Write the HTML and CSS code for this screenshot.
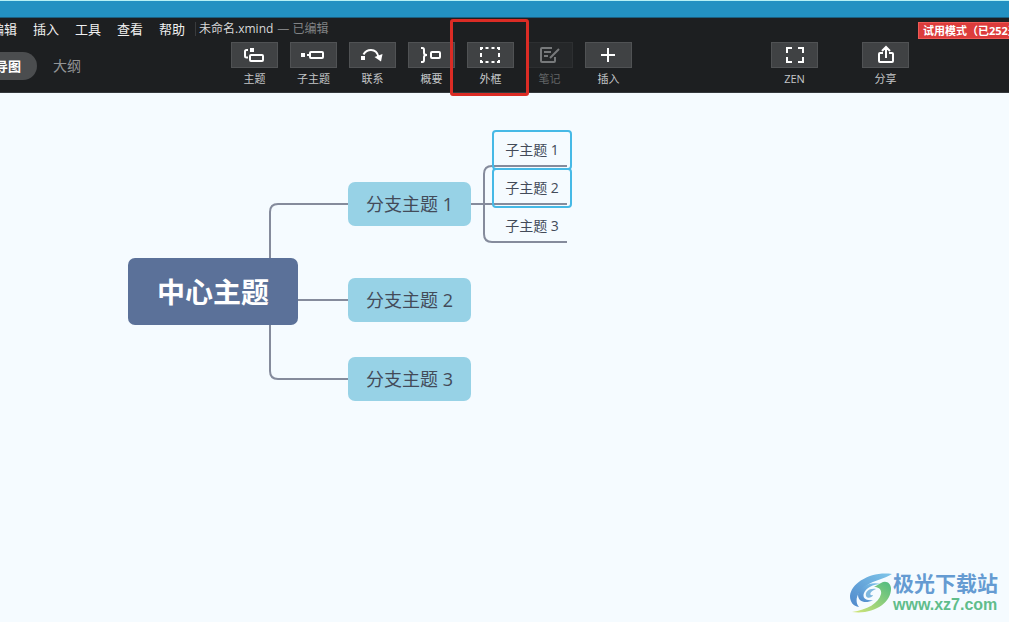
FILE: index.html
```html
<!DOCTYPE html>
<html lang="zh-CN">
<head>
<meta charset="utf-8">
<title>未命名.xmind</title>
<link rel="stylesheet" href="styles.css">
</head>
<body>
<div class="app">
  <header class="header">
    <div class="titlestrip"></div>
    <div class="menubar">
      <nav class="menus">
        <button class="menu">编辑</button>
        <button class="menu">插入</button>
        <button class="menu">工具</button>
        <button class="menu">查看</button>
        <button class="menu">帮助</button>
      </nav>
      <span class="filename">未命名.xmind</span>
      <span class="status">— 已编辑</span>
      <div class="trial">试用模式（已252天）</div>
    </div>
    <div class="toolbar">
      <div class="views">
        <button class="view view-active">思维导图</button>
        <button class="view">大纲</button>
      </div>
      <div class="tools">
        <button class="tool"><span class="tool-icon"><svg class="icon" viewBox="0 0 23 18"><path d="M5 4H3.500Q2 4 2 5.500V10Q2 11.500 3.500 11.500H5"/><path class="solid" d="M7 2h4v4H7z"/><rect x="7" y="9" width="13" height="6" rx="1"/></svg></span><span class="tool-label">主题</span></button>
        <button class="tool"><span class="tool-icon"><svg class="icon" viewBox="0 0 23 18"><path class="solid" d="M-1 7h4v4H-1z"/><path d="M5 9h3"/><rect x="8" y="6" width="13" height="6" rx="1"/></svg></span><span class="tool-label">子主题</span></button>
        <button class="tool"><span class="tool-icon"><svg class="icon" viewBox="0 0 23 18"><path class="solid" d="M0 10h4v4H0z"/><path d="M2.500 8.500Q5 4 10 4Q16 4 17.500 11"/><path class="solid" d="M13.500 11L21.500 8L20 15.500z"/></svg></span><span class="tool-label">联系</span></button>
        <button class="tool"><span class="tool-icon"><svg class="icon" viewBox="0 0 23 18"><path d="M1 2H2.500Q4 2 4 4V7Q4 9 7 9Q4 9 4 11V14Q4 16 2.500 16H1"/><rect x="11" y="6" width="9" height="6" rx="1"/></svg></span><span class="tool-label">概要</span></button>
        <button class="tool"><span class="tool-icon"><svg class="icon" viewBox="0 0 23 18"><path d="M2 4V2H4M6.500 2h3M12.500 2h3M18 2H20V4M20 7v4M20 14v2H18M15.500 16h-3M9.500 16h-3M4 16H2V14M2 11v-4"/></svg></span><span class="tool-label">外框</span><span class="highlight"></span></button>
        <button class="tool tool-off" disabled><span class="tool-icon"><svg class="icon" viewBox="0 0 23 18"><path d="M14 2H4Q3 2 3 3V15Q3 16 4 16H16Q17 16 17 15V11M6 6h7M6 10h4M21 3L12 12"/></svg></span><span class="tool-label">笔记</span></button>
        <button class="tool"><span class="tool-icon"><svg class="icon" viewBox="0 0 23 18"><path d="M11 2V16M4 9H18"/></svg></span><span class="tool-label">插入</span></button>
      </div>
      <div class="tools tools-end">
        <button class="tool"><span class="tool-icon"><svg class="icon" viewBox="0 0 23 18"><path d="M4 7V2H9M15 2H20V7M20 11V16H15M9 16H4V11"/></svg></span><span class="tool-label">ZEN</span></button>
        <button class="tool"><span class="tool-icon"><svg class="icon" viewBox="0 0 23 18"><path d="M9 7H6Q5 7 5 8V15Q5 16 6 16H18Q19 16 19 15V8Q19 7 18 7H15M12 12V2M8 5L12 1L16 5"/></svg></span><span class="tool-label">分享</span></button>
      </div>
    </div>
  </header>
  <main class="canvas">
    <svg class="links" width="600" height="320" viewBox="0 0 600 320">
      <path d="M348 111H278Q270 111 270 119V278Q270 286 278 286H348M290 207H348"/>
      <path d="M470 111H567M567 73H492Q484 73 484 81V141Q484 149 492 149H567"/>
    </svg>
    <div class="node root">中心主题</div>
    <div class="node branch branch-1">分支主题 1</div>
    <div class="node branch branch-2">分支主题 2</div>
    <div class="node branch branch-3">分支主题 3</div>
    <div class="node leaf leaf-1 selected">子主题 1</div>
    <div class="node leaf leaf-2 selected">子主题 2</div>
    <div class="node leaf leaf-3">子主题 3</div>
    <div class="watermark">
      <svg class="logo" viewBox="0 0 44 42">
        <defs>
          <linearGradient id="sky" x1="0" y1="1" x2="1" y2="0"><stop offset="0" stop-color="#4f88cb"/><stop offset="1" stop-color="#7fc6ea"/></linearGradient>
          <linearGradient id="leaf" x1="0" y1="1" x2="1" y2="0"><stop offset="0" stop-color="#d5e678"/><stop offset="1" stop-color="#4fba80"/></linearGradient>
        </defs>
        <path fill="url(#sky)" d="M43 2C22-1 2 11 1 24C1 30 4 34 10 35C5 29 8 20 17 14C25 8 35 7 43 2Z"/>
        <path fill="url(#sky)" d="M32 12C20 9 9 16 9 23C9 30 17 32 24 28C17 29 13 26 15 21C17 16 24 12 32 12Z"/>
        <path fill="#7fb8df" d="M27 17C20 16 16 20 17 24C18 27 23 26 24 23C20 24 20 20 27 17Z"/>
        <path fill="url(#leaf)" d="M32 11C37 8 42 11 42 17C42 31 24 43 3 40C18 38 30 31 32 22C33 17 29 15 25 15Z"/>
      </svg>
      <div class="brand"><span class="brand-name">极光下载站</span><span class="brand-url">www.xz7.com</span></div>
    </div>
  </main>
</div>
</body>
</html>
```
FILE: styles.css
```css
* { box-sizing: border-box; }

body {
  margin: 0;
  font-family: "Open Sans", "Noto Sans CJK SC", sans-serif;
  background: #f5fbff;
}

button {
  margin: 0;
  padding: 0;
  border: 0;
  background: none;
  color: inherit;
  font: inherit;
  white-space: nowrap;
}

.app {
  display: flex;
  flex-direction: column;
  min-height: 100vh;
  overflow: hidden;
}

.header {
  background: #1d1f21;
  color: #f0f0f0;
  border-bottom: 1px solid #34383c;
}

.titlestrip {
  height: 18px;
  background: #2391c2;
  border-top: 1px solid #b5f0f5;
  border-bottom: 1px solid #1c5f80;
}

.menubar {
  display: flex;
  align-items: center;
  height: 22px;
  font-size: 13px;
  line-height: 20px;
  white-space: nowrap;
}

.menus {
  display: flex;
  gap: 16px;
  margin-left: -9px;
  padding-right: 10px;
}

.filename {
  padding-left: 3px;
  border-left: 1px solid #393b3d;
  color: #d8d8d8;
  font-size: 12px;
  line-height: 14px;
}

.status {
  margin-left: 4px;
  color: #818385;
  font-size: 12px;
}

.trial {
  flex: 0 0 91px;
  margin-left: auto;
  margin-top: 3px;
  padding-left: 4px;
  overflow: hidden;
  border: 1px solid #ef5a56;
  border-right: 0;
  background: #dc3c3b;
  color: #fff;
  font-size: 11px;
  font-weight: 700;
  line-height: 15px;
}

.toolbar {
  display: flex;
  align-items: flex-start;
  height: 52px;
  padding-top: 2px;
}

.views {
  display: flex;
  flex: 0 0 231px;
  margin-top: 10px;
}

.view {
  height: 28px;
  padding: 0 16px 2px;
  border-radius: 14px;
  color: #929496;
  font-size: 14px;
}

.view-active {
  margin-left: -47px;
  background: #4b4d4f;
  color: #fff;
  font-size: 13px;
  font-weight: 700;
}

.tools {
  display: flex;
  gap: 12px;
}

.tools-end {
  gap: 44px;
  margin-left: auto;
  margin-right: 100px;
}

.tool {
  position: relative;
  display: flex;
  flex-direction: column;
  align-items: center;
  width: 47px;
}

.tool-icon {
  display: flex;
  align-items: center;
  justify-content: center;
  width: 47px;
  height: 26px;
  border: 1px solid #505254;
  background: #404244;
}

.icon {
  width: 23px;
  height: 18px;
  overflow: visible;
  fill: none;
  stroke: #fff;
  stroke-width: 2;
}

.icon .solid {
  fill: #fff;
  stroke: none;
}

.tool-label {
  margin-top: 3px;
  color: #c4c6c8;
  font-size: 11px;
  line-height: 16px;
}

.tool-off .tool-icon {
  border-color: #2d2f31;
  background: #252729;
}

.tool-off .icon { stroke: #77797b; }
.tool-off .tool-label { color: #626466; }

.highlight {
  position: absolute;
  z-index: 2;
  left: -17px;
  top: -23px;
  width: 79px;
  height: 77px;
  border: 3px solid #db2c25;
  border-radius: 3px;
}

.canvas {
  position: relative;
  flex: 1;
  min-height: 420px;
}

.links {
  position: absolute;
  left: 0;
  top: 0;
  fill: none;
  stroke: #858b9c;
  stroke-width: 2;
}

.node {
  position: absolute;
  display: flex;
  align-items: center;
  justify-content: center;
  padding-bottom: 2px;
  white-space: nowrap;
}

.root {
  left: 128px;
  top: 165px;
  width: 170px;
  height: 67px;
  border-radius: 7px;
  background: #5b7199;
  color: #fff;
  font-size: 28px;
  font-weight: 700;
}

.branch {
  left: 348px;
  width: 123px;
  height: 44px;
  border-radius: 7px;
  background: #97d2e6;
  color: #434b59;
  font-size: 18px;
}

.branch-1 { top: 89px; }
.branch-2 { top: 185px; }
.branch-3 { top: 264px; }

.leaf {
  left: 492px;
  width: 80px;
  height: 40px;
  border: 2px solid transparent;
  border-radius: 4px;
  color: #434b59;
  font-size: 14px;
}

.leaf-1 { top: 37px; }
.leaf-2 { top: 75px; }
.leaf-3 { top: 113px; }

.selected { border-color: #46b9e6; }

.watermark {
  position: absolute;
  right: 11px;
  bottom: 7px;
  display: flex;
  align-items: center;
}

.logo {
  width: 44px;
  height: 42px;
}

.brand {
  display: flex;
  flex-direction: column;
  white-space: nowrap;
}

.brand-name {
  color: #659bd2;
  font-size: 21px;
  font-weight: 700;
  line-height: 24px;
}

.brand-url {
  color: #60bd8b;
  font-family: "Liberation Sans", sans-serif;
  font-size: 16px;
  font-weight: 700;
  line-height: 20px;
}
```
